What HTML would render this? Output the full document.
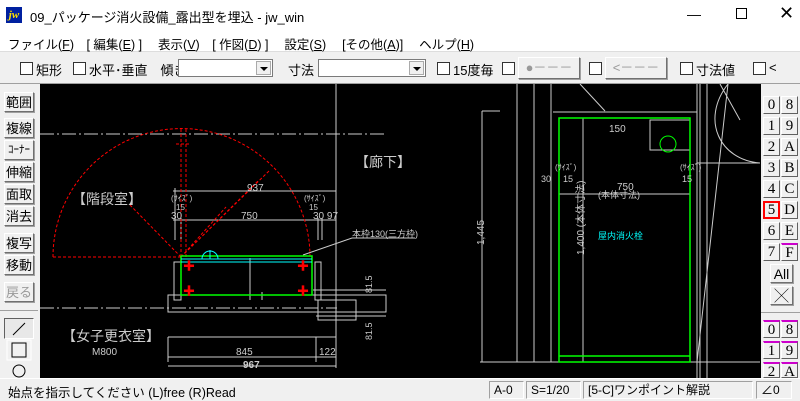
<!DOCTYPE html>
<html><head><meta charset="utf-8"><style>
*{margin:0;padding:0;box-sizing:border-box}
body{width:800px;height:400px;overflow:hidden;background:#f0f0f0;font-family:"Liberation Sans","Noto Sans CJK JP",sans-serif;font-size:12px;color:#000;position:relative}
.a{position:absolute;white-space:nowrap}
.title{left:0;top:0;width:800px;height:30px;background:#fff}
.menu{left:0;top:30px;width:800px;height:22px;background:#fff;border-bottom:1px solid #ddd}
.cb{position:absolute;width:13px;height:13px;border:1px solid #333;background:#fff}
.combo{position:absolute;height:18px;border:1px solid #7a7a7a;background:#fff}
.combo i{position:absolute;right:1px;top:1px;width:15px;height:14px;border:1px solid #aaa;background:#f0f0f0}
.combo i:after{content:"";position:absolute;left:3px;top:5px;border:4px solid transparent;border-top:4px solid #000}
.btn{position:absolute;background:#f0f0f0;border:1px solid;border-color:#fff #707070 #707070 #fff;box-shadow:1px 1px 0 #a0a0a0;text-align:center;font-size:13px;line-height:19px}
.rb{position:absolute;width:17px;height:18px;background:#f0f0f0;border:1px solid;border-color:#fff #606060 #606060 #fff;font-family:"Liberation Serif",serif;font-size:15px;text-align:center;line-height:17px}
.sb{position:absolute;top:381px;height:18px;border:1px solid;border-color:#a0a0a0 #fff #fff #a0a0a0;padding-left:4px;line-height:16px;font-size:12px}
</style></head><body>
<div class="a title"></div>
<div class="a" style="left:6px;top:7px;width:16px;height:16px;background:#0020a0;color:#ffe000;font:bold italic 11px 'Liberation Serif',serif;line-height:16px;text-align:center">jw</div>
<div class="a" style="left:30px;top:7px;font-size:13px">09_パッケージ消火設備_露出型を埋込 - jw_win</div>
<div class="a" style="left:687px;top:6px;font-size:14px">—</div>
<div class="a" style="left:736px;top:8px;width:11px;height:11px;border:1px solid #000"></div>
<div class="a" style="left:779px;top:3px;font-size:18px">✕</div>
<div class="a menu"></div>
<div class="a" style="left:8px;top:34px;font-size:12.5px">ファイル(<u>F</u>)　[ 編集(<u>E</u>) ]　 表示(<u>V</u>)　[ 作図(<u>D</u>) ]　 設定(<u>S</u>)　 [その他(<u>A</u>)]　 ヘルプ(<u>H</u>)</div>
<div class="cb" style="left:20px;top:62px"></div><div class="a" style="left:36px;top:60px;font-size:13px">矩形</div>
<div class="cb" style="left:73px;top:62px"></div><div class="a" style="left:89px;top:60px;font-size:13px">水平･垂直　傾き</div>
<div class="combo" style="left:178px;top:59px;width:95px"><i></i></div>
<div class="a" style="left:288px;top:60px;font-size:13px">寸法</div>
<div class="combo" style="left:318px;top:59px;width:108px"><i></i></div>
<div class="cb" style="left:437px;top:62px"></div><div class="a" style="left:453px;top:60px;font-size:13px">15度毎</div>
<div class="cb" style="left:502px;top:62px"></div>
<div class="btn" style="left:518px;top:57px;width:62px;height:22px;color:#999;font-size:13px">●－－－</div>
<div class="cb" style="left:589px;top:62px"></div>
<div class="btn" style="left:605px;top:57px;width:62px;height:22px;color:#999;font-size:13px">&lt;－－－</div>
<div class="cb" style="left:680px;top:62px"></div><div class="a" style="left:696px;top:60px;font-size:13px">寸法値</div>
<div class="cb" style="left:753px;top:62px"></div><div class="a" style="left:769px;top:60px;font-size:13px">&lt;</div>
<div class="a" style="left:0;top:83px;width:800px;height:1px;background:#a0a0a0"></div>
<div class="btn" style="left:4px;top:92px;width:30px;height:20px">範囲</div>
<div class="btn" style="left:4px;top:118px;width:30px;height:20px">複線</div>
<div class="btn" style="left:4px;top:140px;width:30px;height:20px;font-size:11px">ｺｰﾅｰ</div>
<div class="btn" style="left:4px;top:162px;width:30px;height:20px">伸縮</div>
<div class="btn" style="left:4px;top:184px;width:30px;height:20px">面取</div>
<div class="btn" style="left:4px;top:206px;width:30px;height:20px">消去</div>
<div class="btn" style="left:4px;top:233px;width:30px;height:20px">複写</div>
<div class="btn" style="left:4px;top:255px;width:30px;height:20px">移動</div>
<div class="btn" style="left:4px;top:282px;width:30px;height:20px;color:#999">戻る</div>
<div class="a" style="left:0;top:310px;width:38px;height:1px;background:#a0a0a0"></div>
<div class="a" style="left:4px;top:318px;width:30px;height:21px;border:1px solid;border-color:#606060 #fff #fff #606060;background:#e8e8e8"></div>
<svg class="a" style="left:4px;top:318px" width="30" height="60"><line x1="9" y1="17" x2="21" y2="5" stroke="#000"/><rect x="3" y="22" width="24" height="20" fill="#f0f0f0" stroke="#fff"/><rect x="8" y="25" width="14" height="14" fill="none" stroke="#000"/><circle cx="15" cy="53" r="6" fill="none" stroke="#000"/></svg>
<svg class="a" style="left:40px;top:84px" width="721" height="294" viewBox="40 84 721 294">
<rect x="40" y="84" width="721" height="294" fill="#000"/>
<g stroke="#ccc" stroke-width="1" fill="none">
<path d="M40 134H386M40 308H337" stroke-dasharray="14 3 2 3"/>
<path d="M336 84V368M173 191H336M173 220H336M175 188V240M181 218V240M318 218V240M322 218V240M168 337H336M168 357H336M168 337V362M316 337V362M168 366H336"/>
<path d="M174 262H181V300H174ZM315 262H321V300H315ZM168 295H386V312H168ZM318 300H356V320H318ZM250 258V300M262 292V300M313 290H386M316 316H386M303 255L352 238H415"/>
<path d="M517 84V362M534 84V362M551 84V362M482 111V362M482 111H500M480 362H760M553 112H697V362M583 118V362M559 194H690M650 120H690V150H650Z"/>
<path d="M697 84V378M700 84V378M707 84V378M697 163H760M580 84L605 111M728 84C700 120 720 160 760 163M728 84L697 362M720 84L740 120"/>
</g>
<g stroke="#f00" stroke-width="1" fill="none" stroke-dasharray="3 2">
<path d="M53 257A128 128 0 0 1 310 257M53 257H181M181 129V257M186 129V257M181 257L130 205M181 257L226 207M181 257L258 181M181 257L270 170M176 144H190"/>
</g>
<rect x="181" y="256" width="131" height="39" fill="none" stroke="#0f0" stroke-width="1.5"/>
<path d="M181 259H312M181 262H312" stroke="#0ff"/>
<path d="M202 259A8 8 0 0 1 218 259M210 250V259" stroke="#0ff" fill="none"/>
<g fill="#f00" font-size="12"><text x="183" y="270">✚</text><text x="297" y="270">✚</text><text x="183" y="295">✚</text><text x="297" y="295">✚</text></g>
<rect x="559" y="118" width="131" height="244" fill="none" stroke="#0f0" stroke-width="1.5"/>
<path d="M559 356H690" stroke="#0f0" stroke-width="1.5"/>
<circle cx="668" cy="144" r="8" fill="none" stroke="#0f0"/>
<g fill="#ccc" font-size="10" font-family="Liberation Sans,Noto Sans CJK JP,sans-serif">
<text x="72" y="204" font-size="14">【階段室】</text>
<text x="355" y="167" font-size="14">【廊下】</text>
<text x="62" y="341" font-size="14">【女子更衣室】</text>
<text x="247" y="191">937</text><text x="241" y="219">750</text><text x="171" y="219">30</text><text x="313" y="219">30 97</text>
<text x="171" y="201" font-size="8">(ｻｲｽﾞ)</text><text x="176" y="210" font-size="8">15</text>
<text x="304" y="201" font-size="8">(ｻｲｽﾞ)</text><text x="309" y="210" font-size="8">15</text>
<text x="92" y="355">M800</text><text x="236" y="355">845</text><text x="319" y="355">122</text><text x="243" y="368" font-weight="bold">967</text>
<text x="352" y="237" font-size="9">本枠130(三方枠)</text>
<text x="372" y="293" font-size="9" transform="rotate(-90 372 293)">81.5</text>
<text x="372" y="340" font-size="9" transform="rotate(-90 372 340)">81.5</text>
<text x="609" y="132">150</text><text x="598" y="198" font-size="9">(本体寸法)</text><text x="617" y="190">750</text>
<text x="541" y="182" font-size="9">30</text><text x="555" y="170" font-size="8">(ｻｲｽﾞ)</text><text x="563" y="182" font-size="9">15</text>
<text x="680" y="170" font-size="8">(ｻｲｽﾞ)</text><text x="682" y="182" font-size="9">15</text>
<text x="484" y="245" transform="rotate(-90 484 245)">1,445</text>
<text x="584" y="255" transform="rotate(-90 584 255)">1,400 (本体寸法)</text>
</g>
<text x="598" y="239" fill="#0ff" font-size="9" font-family="Noto Sans CJK JP,sans-serif">屋内消火栓</text>
</svg>
<div class="a" style="left:761px;top:84px;width:39px;height:294px;background:#f0f0f0"></div>
<div class="rb" style="left:763px;top:96px">0</div><div class="rb" style="left:781px;top:96px">8</div>
<div class="rb" style="left:763px;top:117px">1</div><div class="rb" style="left:781px;top:117px">9</div>
<div class="rb" style="left:763px;top:138px">2</div><div class="rb" style="left:781px;top:138px">A</div>
<div class="rb" style="left:763px;top:159px">3</div><div class="rb" style="left:781px;top:159px">B</div>
<div class="rb" style="left:763px;top:180px">4</div><div class="rb" style="left:781px;top:180px">C</div>
<div class="rb" style="left:763px;top:201px;border:2px solid #f00;line-height:15px">5</div><div class="rb" style="left:781px;top:201px">D</div>
<div class="rb" style="left:763px;top:222px">6</div><div class="rb" style="left:781px;top:222px">E</div>
<div class="rb" style="left:763px;top:243px">7</div><div class="rb" style="left:781px;top:243px;border-top:2px solid #c0c">F</div>
<div class="btn" style="left:770px;top:264px;width:23px;height:19px;font-size:14px;line-height:18px">All</div>
<div class="btn" style="left:770px;top:286px;width:23px;height:19px;font-size:14px;line-height:18px">╳</div>
<div class="a" style="left:761px;top:312px;width:39px;height:1px;background:#a0a0a0"></div>
<div class="rb" style="left:763px;top:320px;border-top:2px solid #c0c">0</div><div class="rb" style="left:781px;top:320px;border-top:2px solid #c0c">8</div>
<div class="rb" style="left:763px;top:341px;border-top:2px solid #c0c">1</div><div class="rb" style="left:781px;top:341px;border-top:2px solid #c0c">9</div>
<div class="rb" style="left:763px;top:362px;border-top:2px solid #c0c;height:16px;overflow:hidden">2</div><div class="rb" style="left:781px;top:362px;border-top:2px solid #c0c;height:16px;overflow:hidden">A</div>
<div class="a" style="left:0;top:378px;width:800px;height:22px;background:#f0f0f0;border-top:1px solid #fff"></div>
<div class="a" style="left:8px;top:382px;font-size:12.5px">始点を指示してください (L)free (R)Read</div>
<div class="sb" style="left:489px;width:35px">A-0</div>
<div class="sb" style="left:526px;width:55px">S=1/20</div>
<div class="sb" style="left:583px;width:170px">[5-C]ワンポイント解説</div>
<div class="sb" style="left:756px;width:36px">∠0</div>
</body></html>
